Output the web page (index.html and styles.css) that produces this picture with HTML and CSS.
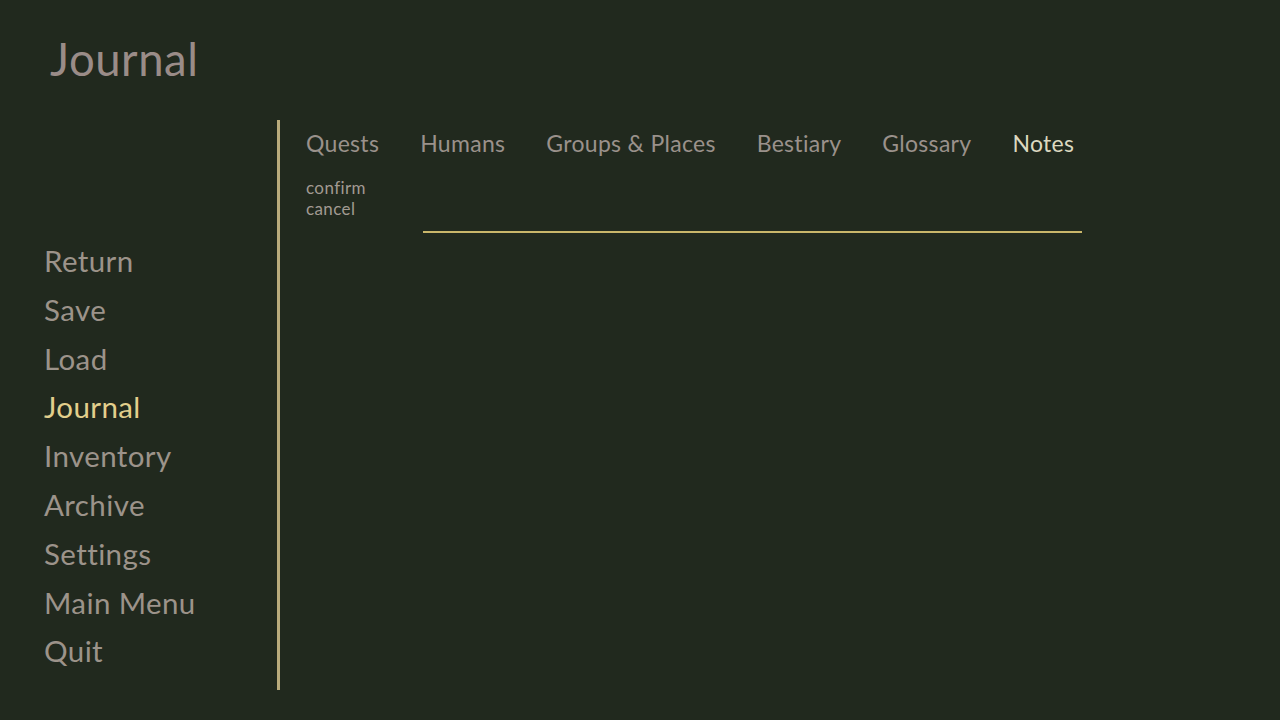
FILE: index.html
```html
<!DOCTYPE html>
<html>
<head>
<meta charset="utf-8">
<link rel="stylesheet" href="styles.css">
</head>
<body>
<div class="screen">
  <h1 class="title">Journal</h1>
  <div class="main">
    <nav class="menu">
      <div class="item">Return</div>
      <div class="item">Save</div>
      <div class="item">Load</div>
      <div class="item active">Journal</div>
      <div class="item">Inventory</div>
      <div class="item">Archive</div>
      <div class="item">Settings</div>
      <div class="item">Main Menu</div>
      <div class="item">Quit</div>
    </nav>
    <div class="divider"></div>
    <section class="content">
      <div class="tabs">
        <span class="tab">Quests</span>
        <span class="tab">Humans</span>
        <span class="tab">Groups &amp; Places</span>
        <span class="tab">Bestiary</span>
        <span class="tab">Glossary</span>
        <span class="tab selected">Notes</span>
      </div>
      <div class="notes">
        <div class="actions">
          <div class="action">confirm</div>
          <div class="action">cancel</div>
        </div>
        <div class="rule"></div>
      </div>
    </section>
  </div>
</div>
</body>
</html>
```
FILE: styles.css
```css
html, body {
  margin: 0;
  padding: 0;
  width: 1280px;
  height: 720px;
  overflow: hidden;
  background: #21291e;
}
.screen {
  width: 1280px;
  height: 720px;
  font-family: "Lato", "Noto Sans", sans-serif;
  color: #9a9088;
  display: flex;
  flex-direction: column;
}
.title {
  margin: 0;
  padding: 33px 0 0 50px;
  height: 120px;
  box-sizing: border-box;
  font-size: 45.5px;
  font-weight: 400;
  line-height: 52px;
  color: #9a8c88;
  letter-spacing: 0.5px;
}
.main {
  display: flex;
  height: 570px;
}
.menu {
  width: 277px;
  padding: 117px 0 0 44px;
  box-sizing: border-box;
  display: flex;
  flex-direction: column;
}
.item {
  font-size: 29.5px;
  line-height: 48.8px;
  height: 48.8px;
  color: #9c938a;
  letter-spacing: 0.4px;
}
.item.active {
  color: #e2cf8c;
}
.divider {
  width: 3px;
  height: 570px;
  background: #b9ab7c;
}
.content {
  flex: 1;
  padding: 9px 0 0 26px;
  box-sizing: border-box;
}
.tabs {
  display: flex;
  gap: 41px;
  font-size: 23px;
  line-height: 28px;
  letter-spacing: 0.3px;
}
.tab {
  color: #9a918b;
}
.tab.selected {
  color: #dcd8c0;
}
.notes {
  display: flex;
  align-items: flex-end;
  margin-top: 20px;
}
.actions {
  width: 117px;
  font-size: 17px;
  line-height: 21px;
  letter-spacing: 0.4px;
  color: #a19a92;
}
.rule {
  width: 659px;
  height: 2px;
  background: #c9b66a;
  margin-bottom: -14px;
}
```
